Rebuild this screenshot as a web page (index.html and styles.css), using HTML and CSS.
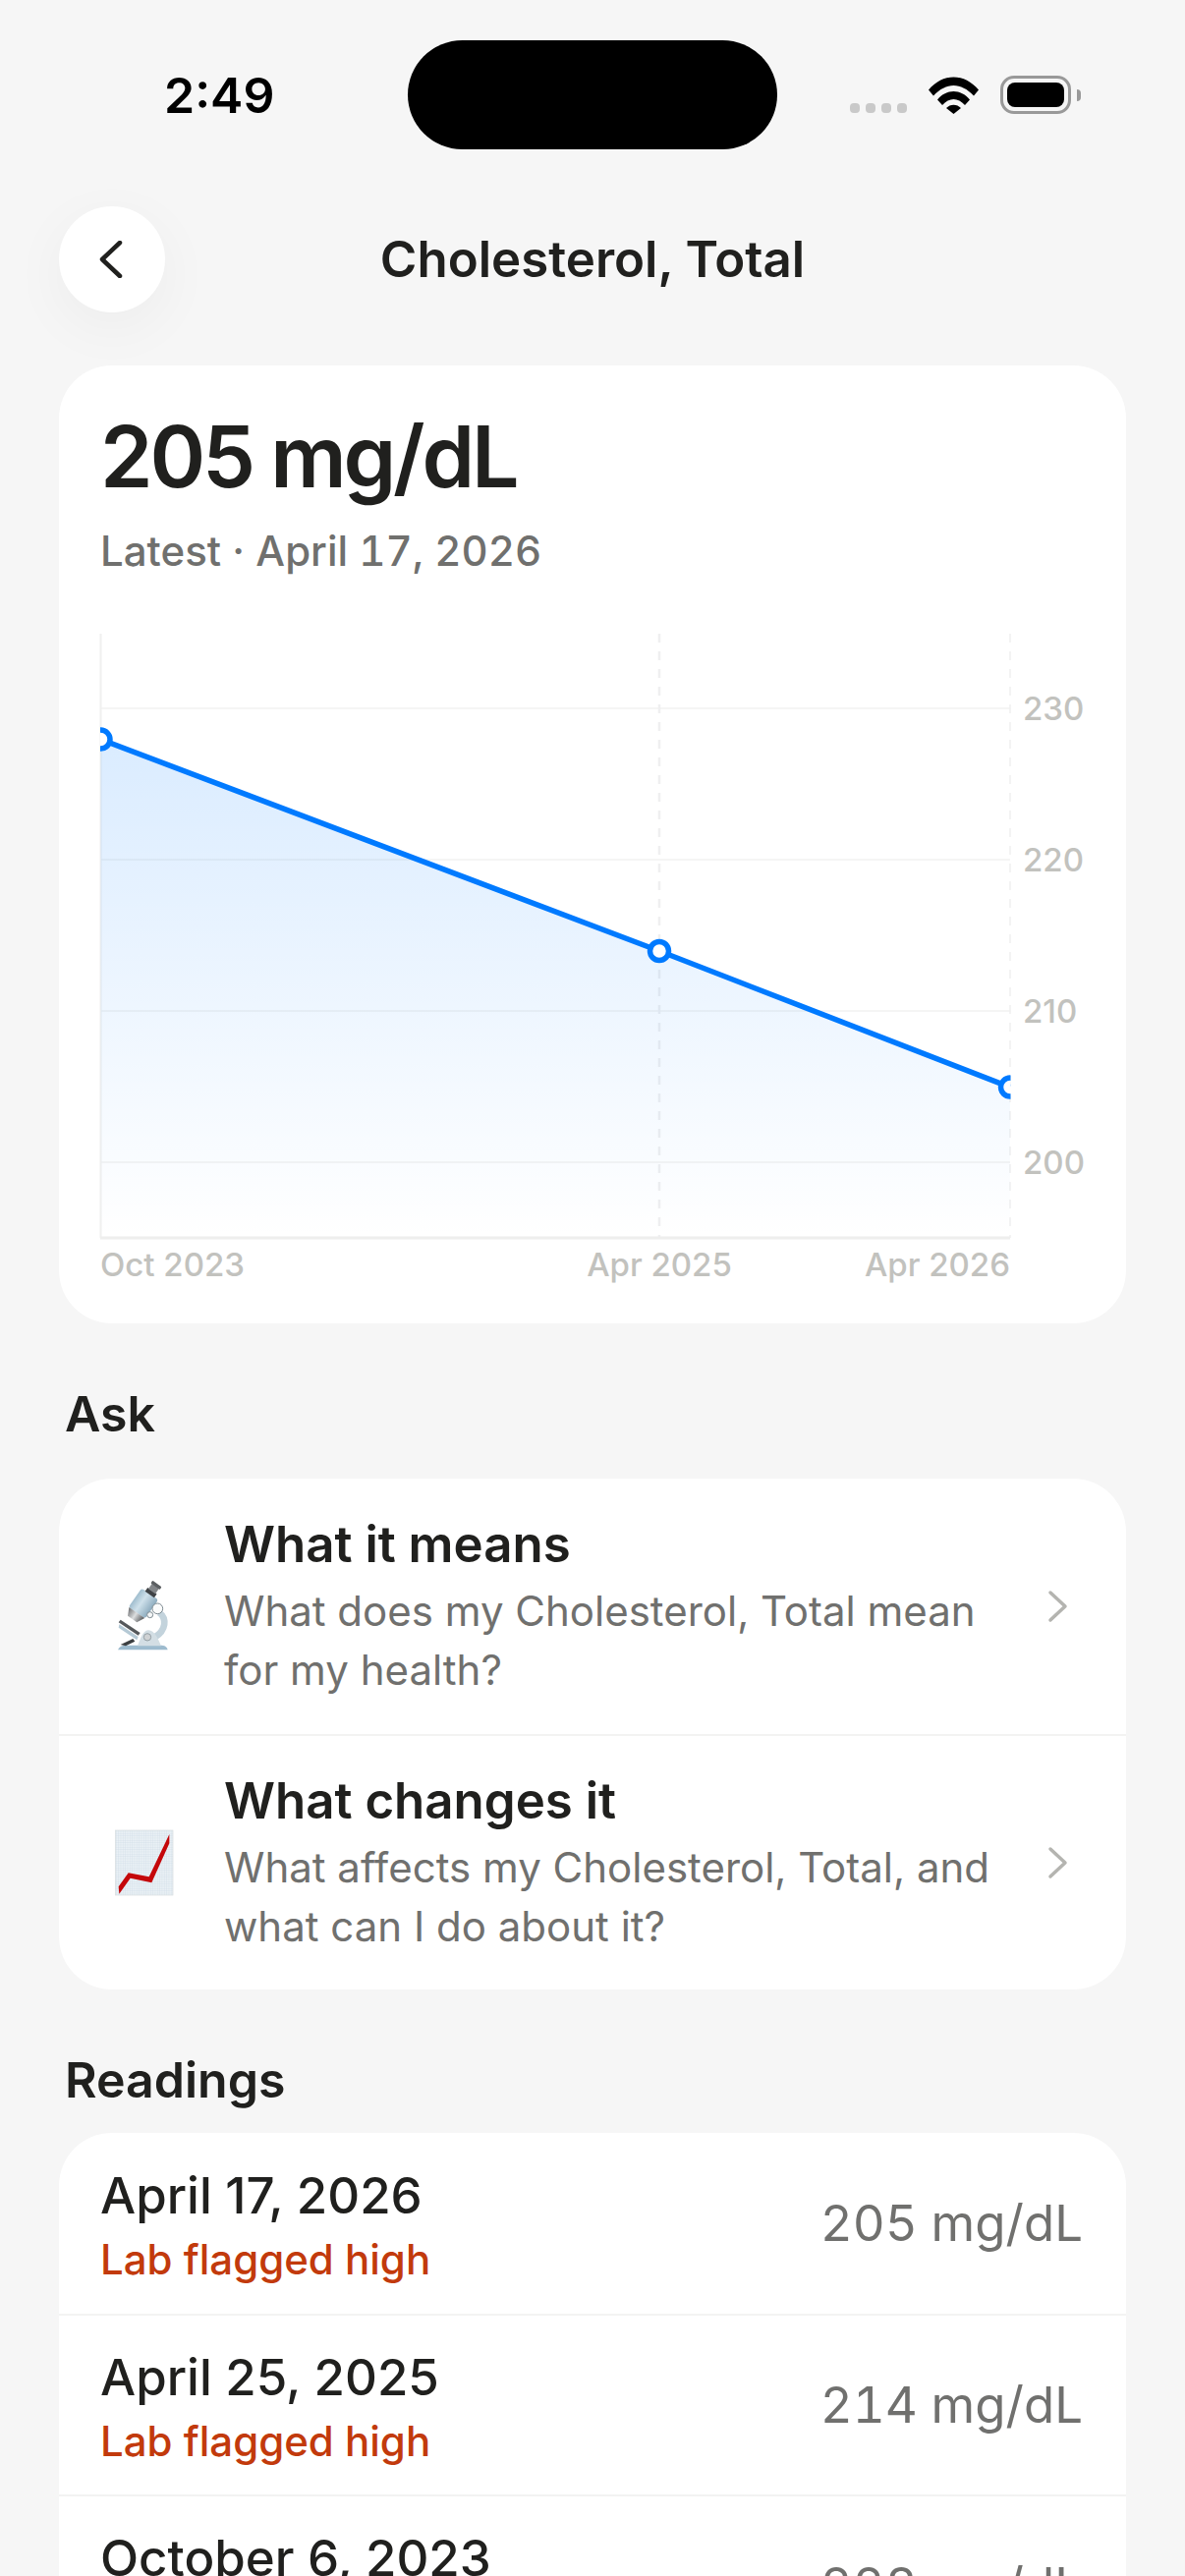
FILE: index.html
```html
<!DOCTYPE html>
<html lang="en">
<head>
<meta charset="utf-8">
<title>Cholesterol, Total</title>
<link rel="stylesheet" href="styles.css">
</head>
<body>
<div class="screen">
  <div class="status">
    <span class="time">2:49</span>
    <div class="island"></div>
    <div class="status-icons">
      <div class="signal"><i></i><i></i><i></i><i></i></div>
      <svg class="wifi" viewBox="0 0 51 38"><path d="M0 13.5 C14 -4 37 -4 51 13.5 L46 19.5 C33 5.5 18 5.5 5 19.5 Z"/><path d="M9 23.5 C18 12 33 12 42 23.5 L37 29 C30 21 21 21 14 29 Z"/><path d="M18 32 C22 27.5 29 27.5 33 32 L25.5 38 Z"/></svg>
      <div class="battery"><div class="battery-level"></div></div>
      <div class="battery-cap"></div>
    </div>
  </div>

  <header class="nav">
    <button class="back" aria-label="Back">
      <svg viewBox="0 0 24 38" width="24" height="38"><path d="M21 2 L3 19 L21 36" class="back-line"/></svg>
    </button>
    <h1 class="nav-title">Cholesterol, Total</h1>
  </header>

  <section class="card summary">
    <div class="big-value">205 mg/dL</div>
    <div class="latest">Latest · April 17, 2026</div>
    <svg class="chart" viewBox="0 0 1002 660" width="1002" height="660">
      <defs>
        <linearGradient id="areaFill" gradientUnits="userSpaceOnUse" x1="0" y1="107" x2="0" y2="615">
          <stop offset="0" stop-color="#007aff" stop-opacity="0.145"/>
          <stop offset="1" stop-color="#007aff" stop-opacity="0"/>
        </linearGradient>
        <clipPath id="plotArea"><rect x="0" y="0" width="926.5" height="615"/></clipPath>
      </defs>
      <g class="grid">
        <line x1="0" x2="926" y1="76" y2="76"/>
        <line x1="0" x2="926" y1="230" y2="230"/>
        <line x1="0" x2="926" y1="384" y2="384"/>
        <line x1="0" x2="926" y1="538" y2="538"/>
      </g>
      <line class="axis-left" x1="0.5" x2="0.5" y1="0" y2="615"/>
      <line class="axis-dash" x1="569" x2="569" y1="0" y2="615"/>
      <line class="axis-dash thin" x1="926" x2="926" y1="0" y2="615"/>
      <line class="axis-bottom" x1="0" x2="926" y1="615" y2="615"/>
      <g clip-path="url(#plotArea)">
        <path d="M0.5 107.6 L569 323 L926 461.6 L926 615 L0.5 615 Z" fill="url(#areaFill)"/>
        <path class="trend" d="M0.5 107.6 L569 323 L926 461.6"/>
        <circle class="pt" cx="0.5" cy="107.6" r="9.5"/>
        <circle class="pt" cx="569" cy="323" r="9.5"/>
        <circle class="pt" cx="926" cy="461.6" r="9.5"/>
      </g>
      <g class="tick">
        <text x="939" y="88">230</text>
        <text x="939" y="242">220</text>
        <text x="939" y="396">210</text>
        <text x="939" y="550">200</text>
        <text x="0" y="654">Oct 2023</text>
        <text x="569" y="654" text-anchor="middle">Apr 2025</text>
        <text x="926" y="654" text-anchor="end">Apr 2026</text>
      </g>
    </svg>
  </section>

  <h2 class="section section-ask">Ask</h2>
  <section class="card">
    <div class="ask-row">
      <div class="emoji">
        <svg viewBox="0 0 300 330" width="100" height="110">
          <defs>
            <linearGradient id="tube" x1="0" y1="0" x2="1" y2="0"><stop offset="0" stop-color="#9fbdce"/><stop offset=".4" stop-color="#cfe1eb"/><stop offset="1" stop-color="#8cabbe"/></linearGradient>
            <linearGradient id="lens" x1="0" y1="0" x2="1" y2="0"><stop offset="0" stop-color="#6b6d70"/><stop offset=".5" stop-color="#dcdedf"/><stop offset="1" stop-color="#505255"/></linearGradient>
          </defs>
          <path d="M60 298 C64 288 72 284 84 284 L190 284 C202 284 210 288 212 298 Z" fill="#9dbbce"/>
          <path d="M186 184 C210 202 208 238 172 260" fill="none" stroke="#c3d3dc" stroke-width="20"/>
          <path d="M120 286 C130 262 136 240 152 238 C170 236 184 266 192 286 Z" fill="#d3dee4"/>
          <circle cx="150" cy="259" r="11" fill="#cfd2d4" stroke="#949fa5" stroke-width="3"/>
          <path d="M68 206 L128 246 L122 254 L62 214 Z" fill="#55585b"/>
          <path d="M64 220 L122 258 L118 268 L62 230 Z" fill="#b5c9d5"/>
          <path d="M68 282 L106 264 L112 272 L84 286 Z" fill="#3c3f41"/>
          <g transform="rotate(35 135 160)">
            <rect x="104" y="120" width="62" height="70" rx="8" fill="url(#tube)"/>
            <path d="M106 190 L164 190 L152 214 L118 214 Z" fill="url(#lens)"/>
            <rect x="118" y="108" width="34" height="14" fill="#3f4245"/>
            <rect x="122" y="90" width="26" height="20" fill="#828588"/>
            <rect x="118" y="82" width="34" height="10" rx="3" fill="#5c5f62"/>
          </g>
          <circle cx="181" cy="172" r="16" fill="#fafbfb" stroke="#7d8a91" stroke-width="3"/>
          <circle cx="158" cy="191" r="9" fill="#f4f6f7" stroke="#7d8a91" stroke-width="3"/>
        </svg>
      </div>
      <div class="ask-text">
        <div class="ask-title">What it means</div>
        <div class="ask-sub">What does my Cholesterol, Total mean for my health?</div>
      </div>
      <svg class="chev" viewBox="0 0 22 34" width="22" height="34"><path d="M3 3 L18 17 L3 31"/></svg>
    </div>
    <div class="ask-row divided">
      <div class="emoji">
        <svg viewBox="0 0 300 330" width="100" height="110">
          <defs>
            <pattern id="paper" width="7" height="7" patternUnits="userSpaceOnUse">
              <rect width="7" height="7" fill="#e9f0f5"/>
              <path d="M7 0 V7 M0 7 H7" stroke="#c4d6e3" stroke-width="1.4"/>
            </pattern>
          </defs>
          <rect x="52" y="66" width="176" height="198" fill="url(#paper)" stroke="#d6dcdf" stroke-width="2"/>
          <path d="M62 238 L92 196 L155 208 L217 78 L217 106 L163 226 L98 212 L64 260 Z" fill="#c4070a"/>
        </svg>
      </div>
      <div class="ask-text">
        <div class="ask-title">What changes it</div>
        <div class="ask-sub">What affects my Cholesterol, Total, and what can I do about it?</div>
      </div>
      <svg class="chev" viewBox="0 0 22 34" width="22" height="34"><path d="M3 3 L18 17 L3 31"/></svg>
    </div>
  </section>

  <h2 class="section section-readings">Readings</h2>
  <section class="card">
    <div class="reading">
      <div class="reading-main">
        <div class="reading-date">April 17, 2026</div>
        <div class="reading-flag">Lab flagged high</div>
      </div>
      <div class="reading-value">205 mg/dL</div>
    </div>
    <div class="reading divided">
      <div class="reading-main">
        <div class="reading-date">April 25, 2025</div>
        <div class="reading-flag">Lab flagged high</div>
      </div>
      <div class="reading-value">214 mg/dL</div>
    </div>
    <div class="reading divided">
      <div class="reading-main">
        <div class="reading-date">October 6, 2023</div>
        <div class="reading-flag">Lab flagged high</div>
      </div>
      <div class="reading-value">228 mg/dL</div>
    </div>
  </section>
</div>
</body>
</html>
```
FILE: styles.css
```css
* { box-sizing: border-box; }

html, body { margin: 0; padding: 0; }

body {
  background: #f6f6f6;
  font-family: Inter, "Liberation Sans", sans-serif;
  color: #20201e;
}

.screen {
  width: 1206px;
  height: 2622px;
  overflow: hidden;
}

/* Status bar */
.status {
  display: grid;
  grid-template-columns: 1fr 376px 1fr;
  align-items: center;
  margin: 41px 0 58px;
}

.time {
  padding-left: 167px;
  font-size: 50px;
  font-weight: 600;
  color: #000;
  line-height: 60px;
}

.island {
  height: 111px;
  border-radius: 56px;
  background: #000;
}

.status-icons {
  display: flex;
  align-items: center;
  justify-content: flex-end;
  padding-right: 106px;
}

.signal {
  display: flex;
  gap: 6px;
  align-self: flex-end;
  margin: 0 22px 0 0;
  transform: translateY(-1px);
}

.signal i {
  width: 10px;
  height: 10px;
  border-radius: 4px;
  background: #c9c9c9;
}

.wifi {
  width: 51px;
  height: 38px;
  fill: #000;
  margin-right: 22px;
}

.battery {
  width: 72px;
  height: 39px;
  padding: 4px;
  border: 3px solid #999;
  border-radius: 14px;
}

.battery-level {
  height: 100%;
  border-radius: 8px;
  background: #000;
}

.battery-cap {
  width: 4px;
  height: 12px;
  margin-left: 6px;
  border-radius: 0 6px 6px 0;
  background: #999;
}

/* Navigation */
.nav {
  display: grid;
  grid-template-columns: 108px 1fr 108px;
  align-items: center;
  height: 108px;
  margin: 0 60px 54px;
}

.back {
  width: 108px;
  height: 108px;
  padding: 0 3px 0 0;
  border: 0;
  border-radius: 50%;
  background: #fff;
  box-shadow: 0 15px 60px rgba(0, 0, 0, 0.045);
  display: flex;
  align-items: center;
  justify-content: center;
}

.back-line {
  fill: none;
  stroke: #20201e;
  stroke-width: 4.5;
  stroke-linecap: round;
  stroke-linejoin: round;
}

.nav-title {
  margin: 0;
  text-align: center;
  font-size: 51px;
  font-weight: 600;
  line-height: 60px;
}

/* Cards */
.card {
  margin: 0 60px;
  border-radius: 54px;
  background: #fff;
  overflow: hidden;
}

.summary {
  height: 975px;
  padding: 45px 0 0 42px;
}

.big-value {
  font-size: 86px;
  font-weight: 600;
  line-height: 96px;
  letter-spacing: -3.2px;
}

.latest {
  margin-top: 21px;
  font-size: 42px;
  font-weight: 500;
  font-variant-numeric: tabular-nums;
  line-height: 54px;
  color: #70706e;
}

/* Chart */
.chart {
  display: block;
  margin-top: 57px;
  overflow: visible;
}

.grid line {
  stroke: #f2f2f1;
  stroke-width: 1.5;
}

.axis-left {
  stroke: #f0f0ef;
  stroke-width: 2;
}

.axis-bottom {
  stroke: #eeeeed;
  stroke-width: 3;
}

.axis-dash {
  stroke: #efeff0;
  stroke-width: 2.5;
  stroke-dasharray: 9 9;
}

.axis-dash.thin {
  stroke-width: 1.5;
}

.trend {
  fill: none;
  stroke: #007aff;
  stroke-width: 5.5;
}

.pt {
  fill: #fff;
  stroke: #007aff;
  stroke-width: 5.5;
}

.tick text {
  font-family: Inter, "Liberation Sans", sans-serif;
  font-size: 33px;
  font-weight: 500;
  fill: #c2c2be;
}

/* Section headings */
.section {
  margin: 0;
  padding-left: 66px;
  font-size: 50px;
  font-weight: 600;
  line-height: 60px;
}

.section-ask {
  margin: 62px 0 36px;
}

.section-readings {
  margin: 62px 0 24px;
}

/* Ask rows */
.ask-row {
  display: flex;
  align-items: center;
  height: 260px;
  padding: 0 58px 0 40px;
}

.divided {
  border-top: 2px solid #f3f3f2;
}

.emoji {
  width: 100px;
  height: 110px;
  flex: none;
  margin-right: 28px;
}

.ask-text {
  flex: 1;
  min-width: 0;
  padding-top: 2px;
}

.ask-title {
  font-size: 51px;
  font-weight: 600;
  line-height: 60px;
  margin-bottom: 8px;
}

.ask-sub {
  font-size: 42px;
  line-height: 60px;
  color: #70706e;
  padding-right: 40px;
}

.chev {
  flex: none;
  fill: none;
  stroke: #b4b4b0;
  stroke-width: 3.5;
  stroke-linecap: round;
  stroke-linejoin: round;
}

/* Reading rows */
.reading {
  display: flex;
  align-items: center;
  justify-content: space-between;
  height: 184px;
  padding: 0 44px 0 42px;
}

.reading-main {
  padding-top: 2px;
}

.reading-date {
  font-size: 51px;
  font-weight: 500;
  line-height: 60px;
}

.reading-flag {
  margin-top: 11px;
  font-size: 42px;
  font-weight: 500;
  line-height: 48px;
  color: #c23a0c;
}

.reading-value {
  font-size: 51px;
  line-height: 60px;
  font-variant-numeric: tabular-nums;
  color: #70706e;
}
```
